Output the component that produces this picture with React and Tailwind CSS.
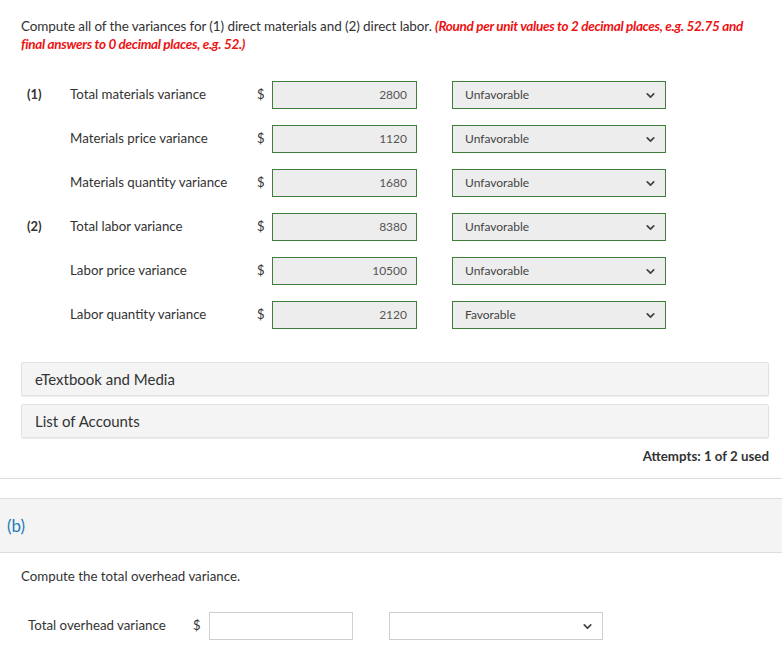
import { ChevronDown } from "lucide-react";

const rows = [
  { num: "(1)", label: "Total materials variance", value: "2800", kind: "Unfavorable" },
  { num: "", label: "Materials price variance", value: "1120", kind: "Unfavorable" },
  { num: "", label: "Materials quantity variance", value: "1680", kind: "Unfavorable" },
  { num: "(2)", label: "Total labor variance", value: "8380", kind: "Unfavorable" },
  { num: "", label: "Labor price variance", value: "10500", kind: "Unfavorable" },
  { num: "", label: "Labor quantity variance", value: "2120", kind: "Favorable" },
];

function Select({ value, answered }) {
  return (
    <div
      className={
        answered
          ? "flex h-[28px] w-[214px] items-center justify-between border border-[#3f7f3a] bg-[#ededed] pl-[12px] pr-[8px]"
          : "flex h-[28px] w-[214px] items-center justify-between border border-[#cfcfcf] bg-white pl-[12px] pr-[8px]"
      }
    >
      <span className="text-[12px] text-[#444]">{value}</span>
      <ChevronDown size={13} strokeWidth={3.2} className="text-[#444]" />
    </div>
  );
}

export default function App() {
  return (
    <div className="h-[666px] w-[782px] overflow-hidden bg-white text-[#333] font-['Lato','Liberation_Sans',sans-serif]">
      <p className="px-[21px] pt-[17px] text-[13.5px] leading-[18px] tracking-[-0.1px]">
        Compute all of the variances for (1) direct materials and (2) direct labor.{" "}
        <span className="font-bold italic tracking-[-0.3px] text-[#ee1111]">
          (Round per unit values to 2 decimal places, e.g. 52.75 and final answers to 0 decimal places, e.g. 52.)
        </span>
      </p>

      <div className="mt-[28px] flex flex-col gap-[16px] pl-[27px]">
        {rows.map((row, i) => (
          <div key={i} className="flex h-[28px] items-center">
            <span className="w-[43px] text-[13px] font-bold">{row.num}</span>
            <span className="w-[187px] text-[13.3px]">{row.label}</span>
            <span className="w-[15px] text-[13px]">$</span>
            <div className="flex h-[28px] w-[145px] items-center justify-end border border-[#3f7f3a] bg-[#ededed] pr-[9px] text-[12px] text-[#555]">
              {row.value}
            </div>
            <div className="ml-[35px]">
              <Select value={row.kind} answered />
            </div>
          </div>
        ))}
      </div>

      <div className="ml-[21px] mr-[13px] mt-[33px] flex flex-col gap-[8px]">
        <div className="flex h-[34px] items-center rounded-[2px] border border-[#e2e2e2] bg-[#f4f4f4] pl-[13px] text-[15px] text-[#333] shadow-[0_1px_1px_rgba(0,0,0,0.08)]">
          eTextbook and Media
        </div>
        <div className="flex h-[34px] items-center rounded-[2px] border border-[#e2e2e2] bg-[#f4f4f4] pl-[13px] text-[15px] text-[#333] shadow-[0_1px_1px_rgba(0,0,0,0.08)]">
          List of Accounts
        </div>
      </div>

      <div className="mt-[9px] border-b border-[#dddddd] px-[13px] pb-[13px] text-right text-[13.3px] font-bold leading-[18px]">
        Attempts: 1 of 2 used
      </div>

      <div className="mt-[19px] flex h-[55px] items-center border-y border-[#dddddd] bg-[#f4f4f4] pl-[7px] text-[17px] text-[#1f7bb8]">
        (b)
      </div>

      <p className="mt-[14px] pl-[21px] text-[13.3px] leading-[18px]">Compute the total overhead variance.</p>

      <div className="mt-[27px] flex h-[28px] items-center pl-[28px]">
        <span className="w-[165px] text-[13.3px]">Total overhead variance</span>
        <span className="w-[16px] text-[13px]">$</span>
        <div className="h-[28px] w-[144px] border border-[#cfcfcf] bg-white" />
        <div className="ml-[36px]">
          <Select value="" />
        </div>
      </div>
    </div>
  );
}
